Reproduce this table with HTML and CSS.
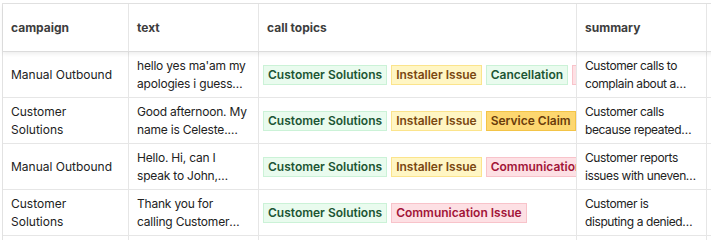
FILE: index.html
```html
<!DOCTYPE html>
<html>
<head>
<meta charset="utf-8">
<link rel="stylesheet" href="styles.css">
</head>
<body>
<div class="grid">
  <div class="row head">
    <div class="cell">campaign</div>
    <div class="cell">text</div>
    <div class="cell">call topics</div>
    <div class="cell">summary</div>
    <div class="cell"></div>
  </div>
  <div class="row">
    <div class="cell wide"><span class="clamp">Manual Outbound</span></div>
    <div class="cell"><span class="clamp">hello yes ma'am my apologies i guess whatever happened there</span></div>
    <div class="cell tags">
      <span class="tag green">Customer Solutions</span>
      <span class="tag yellow">Installer Issue</span>
      <span class="tag green">Cancellation</span>
      <span class="tag red">Communication Issue</span>
    </div>
    <div class="cell tight"><span class="clamp">Customer calls to complain about a delayed install</span></div>
    <div class="cell tags"><span class="tag green">Resolved</span></div>
  </div>
  <div class="row">
    <div class="cell wide"><span class="clamp">Customer Solutions</span></div>
    <div class="cell"><span class="clamp">Good afternoon. My name is Celeste. How can I help</span></div>
    <div class="cell tags">
      <span class="tag green">Customer Solutions</span>
      <span class="tag yellow">Installer Issue</span>
      <span class="tag orange">Service Claim</span>
    </div>
    <div class="cell tight"><span class="clamp">Customer calls because repeated issues with panel</span></div>
    <div class="cell tags"><span class="tag green">Resolved</span></div>
  </div>
  <div class="row">
    <div class="cell wide"><span class="clamp">Manual Outbound</span></div>
    <div class="cell"><span class="clamp">Hello. Hi, can I speak to John, please? Yes this is</span></div>
    <div class="cell tags">
      <span class="tag green">Customer Solutions</span>
      <span class="tag yellow">Installer Issue</span>
      <span class="tag red">Communication Issue</span>
    </div>
    <div class="cell tight"><span class="clamp">Customer reports issues with uneven installation work</span></div>
    <div class="cell tags"><span class="tag green">Resolved</span></div>
  </div>
  <div class="row">
    <div class="cell wide"><span class="clamp">Customer Solutions</span></div>
    <div class="cell"><span class="clamp">Thank you for calling Customer Solutions, this is</span></div>
    <div class="cell tags">
      <span class="tag green">Customer Solutions</span>
      <span class="tag red">Communication Issue</span>
    </div>
    <div class="cell tight"><span class="clamp">Customer is disputing a denied warranty claim</span></div>
    <div class="cell tags"><span class="tag green">Resolved</span></div>
  </div>
  <div class="row">
    <div class="cell"></div>
    <div class="cell"></div>
    <div class="cell"></div>
    <div class="cell"></div>
    <div class="cell"></div>
  </div>
</div>
</body>
</html>
```
FILE: styles.css
```css
html, body {
  margin: 0;
  padding: 0;
  background: #ffffff;
  overflow: hidden;
}
body {
  font-family: Inter, "Liberation Sans", sans-serif;
  font-size: 12px;
  letter-spacing: -0.2px;
  color: #222222;
}
.grid {
  margin: 3px 0 0 2px;
  border-top: 1px solid #e2e2e2;
  border-left: 1px solid #e2e2e2;
  width: 1000px;
}
.row {
  display: grid;
  grid-template-columns: 126px 130px 318px 130px 200px;
  height: 46px;
  border-bottom: 1px solid #e6e6e6;
  box-sizing: border-box;
}
.row.head {
  height: 48px;
  border-bottom: 1px solid #dcdcdc;
  box-shadow: 0 2px 4px rgba(0, 0, 0, 0.07);
  position: relative;
  z-index: 1;
  font-weight: 700;
  font-size: 12px;
  letter-spacing: 0;
  color: #3d3d3d;
}
.cell {
  border-right: 1px solid #e6e6e6;
  padding: 0 8px;
  display: flex;
  align-items: center;
  overflow: hidden;
  line-height: 18px;
  min-width: 0;
}
.cell.wide {
  letter-spacing: 0;
}
.cell.tight {
  letter-spacing: -0.4px;
  padding-right: 6px;
}
.clamp {
  display: -webkit-box;
  -webkit-line-clamp: 2;
  -webkit-box-orient: vertical;
  overflow: hidden;
}
.cell.tags {
  padding: 0 4px;
  gap: 4px;
  flex-wrap: nowrap;
}
.tag {
  flex-shrink: 0;
  white-space: nowrap;
  font-weight: 600;
  font-size: 12px;
  letter-spacing: 0;
  line-height: 18px;
  padding: 0 4px;
  border: 1px solid;
}
.tag.green {
  background: #e9fbee;
  border-color: #cbf2d7;
  color: #1c5534;
}
.tag.yellow {
  background: #fff6c4;
  border-color: #fbe48c;
  color: #7a4811;
}
.tag.orange {
  background: #fdd770;
  border-color: #f3c447;
  color: #6a3c0b;
}
.tag.red {
  background: #fde0e4;
  border-color: #f8c3ca;
  color: #a21538;
}
```
